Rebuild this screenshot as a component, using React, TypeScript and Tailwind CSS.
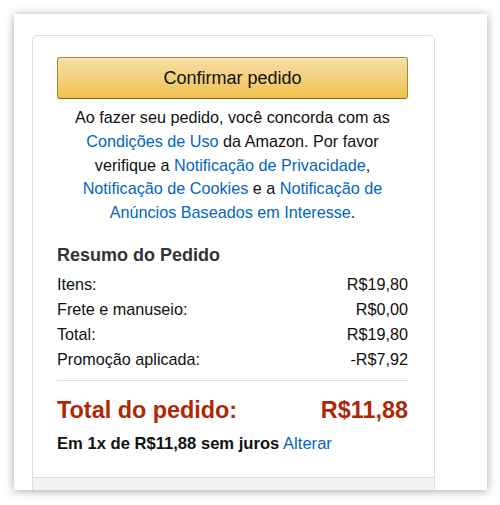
import React from "react";

const Link = ({ children }: { children: React.ReactNode }) => (
  <span className="text-[#0066c0]">{children}</span>
);

const Row = ({ label, value }: { label: string; value: string }) => (
  <div className="flex justify-between h-[25px] leading-[25px]">
    <span>{label}</span>
    <span>{value}</span>
  </div>
);

export default function App() {
  return (
    <div
      className="w-[500px] h-[505px] bg-white pt-[14px] pl-[14px]"
      style={{ fontFamily: '"Liberation Sans", Arial, sans-serif' }}
    >
      <div className="w-[473px] h-[476px] bg-white overflow-hidden shadow-[0_1px_9px_rgba(0,0,0,0.35)] pt-[21px] pl-[18px]">
        <div className="w-[403px] border border-[#dddddd] rounded-[5px] text-[#111] text-[16.2px]">
          <div className="pt-[21px] pl-[24px] pr-[26px] pb-[22px]">
            <button className="w-full h-[42px] rounded-[3px] border border-[#a88734] border-b-[#846a29] bg-gradient-to-b from-[#f7dfa5] to-[#f0c14b] text-[18px] text-[#111] shadow-[inset_0_1px_0_rgba(255,255,255,0.4)]">
              Confirmar pedido
            </button>
            <p className="mt-[7px] text-center leading-[23.8px]">
              Ao fazer seu pedido, você concorda com as
              <br />
              <Link>Condições de Uso</Link> da Amazon. Por favor
              <br />
              verifique a <Link>Notificação de Privacidade</Link>,
              <br />
              <Link>Notificação de Cookies</Link> e a <Link>Notificação de</Link>
              <br />
              <Link>Anúncios Baseados em Interesse</Link>.
            </p>
            <h3 className="mt-[18px] h-[24px] leading-[24px] text-[18px] font-bold text-[#333]">
              Resumo do Pedido
            </h3>
            <div className="mt-[5px]">
              <Row label="Itens:" value="R$19,80" />
              <Row label="Frete e manuseio:" value="R$0,00" />
              <Row label="Total:" value="R$19,80" />
              <Row label="Promoção aplicada:" value="-R$7,92" />
            </div>
            <div className="mt-[8px] border-t border-[#dddddd]" />
            <div className="mt-[14px] flex justify-between h-[30px] leading-[30px] text-[23.4px] font-bold text-[#B12704]">
              <span>Total do pedido:</span>
              <span>R$11,88</span>
            </div>
            <div className="mt-[8px] h-[22px] leading-[22px] text-[16.6px]">
              <span className="font-bold">Em 1x de R$11,88 sem juros</span>{" "}
              <Link>Alterar</Link>
            </div>
          </div>
          <div className="h-[40px] bg-[#f3f3f3] border-t border-[#dddddd]" />
        </div>
      </div>
    </div>
  );
}
